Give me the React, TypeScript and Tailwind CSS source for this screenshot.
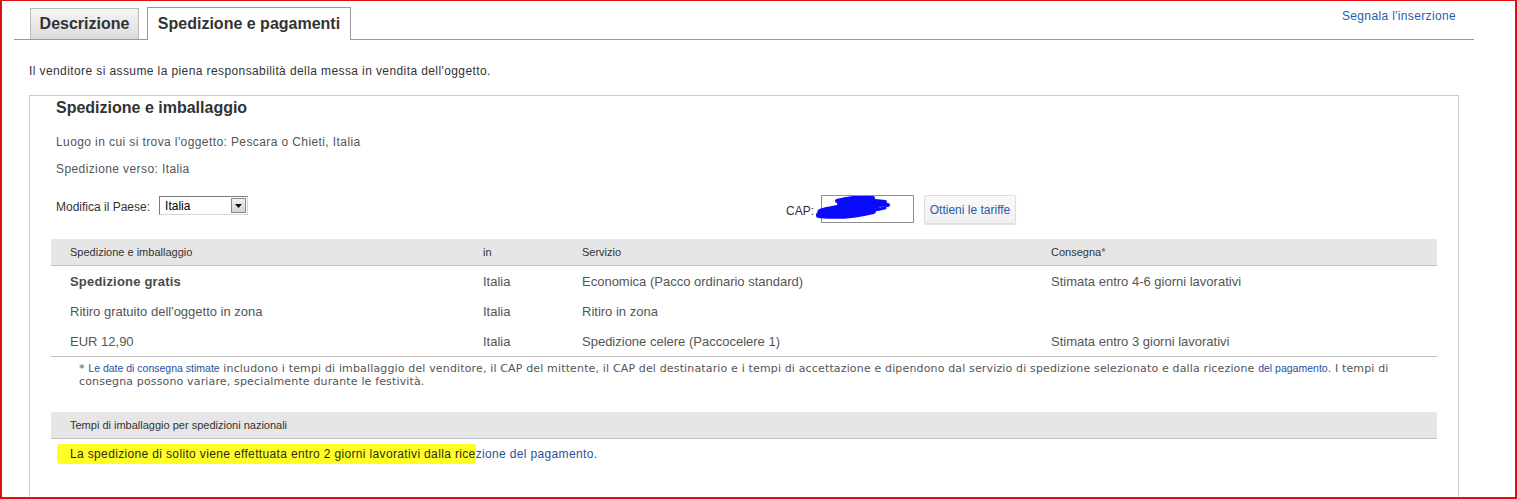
import React from "react";

const sans = "font-['Liberation_Sans',Arial,sans-serif]";

function Select() {
  return (
    <div className="relative flex h-[19px] w-[89px] items-center border border-t-[#7b7b7b] border-l-[#7b7b7b] border-r-[#d6d6d6] border-b-[#d6d6d6] bg-white">
      <span className="pl-[5px] text-[12px] leading-[14px] text-black">Italia</span>
      <div className="absolute right-[1px] top-[1px] flex h-[15px] w-[15px] items-center justify-center border border-[#8a8a8a] bg-gradient-to-b from-[#f2f2f2] to-[#d4d4d4]">
        <svg width="7" height="4" viewBox="0 0 7 4">
          <path d="M0 0 H7 L3.5 4 Z" fill="#111" />
        </svg>
      </div>
    </div>
  );
}

export default function App() {
  return (
    <div
      className={`${sans} relative h-[499px] w-[1517px] overflow-hidden border-t border-l-2 border-r-2 border-b-2 border-[#e01010] bg-white text-[#333]`}
    >
      {/* Tabs */}
      <div className="ml-[12px] flex h-[39px] w-[1460px] items-end border-b border-[#999] pl-[16px]">
        <div className="flex h-[31px] w-[109px] items-center justify-center border border-b-0 border-[#b9b9b9] bg-gradient-to-b from-[#f5f5f5] to-[#dcdcdc] text-[16px] font-bold leading-[18px] text-[#333]">
          Descrizione
        </div>
        <div className="-mb-px ml-[8px] flex h-[33px] w-[204px] items-center justify-center border border-b-0 border-[#999] bg-white pb-[1px] text-[16px] font-bold leading-[18px] text-[#333]">
          Spedizione e pagamenti
        </div>
        <a className="mt-[8px] mr-[18px] ml-auto self-start text-[12px] leading-[14px] tracking-[0.35px] text-[#2b5aa8]">
          Segnala l'inserzione
        </a>
      </div>

      <p className="mt-[24px] ml-[27px] text-[12px] leading-[14px] tracking-[0.4px] text-[#333]">
        Il venditore si assume la piena responsabilità della messa in vendita dell'oggetto.
      </p>

      {/* Box */}
      <div className="mt-[17px] ml-[27px] h-[420px] w-[1430px] border border-[#cccccc] pt-[3px]">
        <h2 className="pl-[26px] text-[16px] font-bold leading-[18px] text-[#333]">Spedizione e imballaggio</h2>
        <p className="mt-[18px] pl-[26px] text-[12px] leading-[14px] tracking-[0.4px] text-[#555]">
          Luogo in cui si trova l'oggetto: Pescara o Chieti, Italia
        </p>
        <p className="mt-[13px] pl-[26px] text-[12px] leading-[14px] tracking-[0.4px] text-[#555]">
          Spedizione verso: Italia
        </p>

        <div className="mt-[19px] flex h-[29px] pl-[26px]">
          <div className="flex w-[730px] items-end self-start pt-[1px]">
            <span className="mb-[1px] text-[12px] leading-[14px] text-[#333]">Modifica il Paese:</span>
            <div className="ml-[9px]">
              <Select />
            </div>
          </div>
          <div className="flex items-start">
            <span className="mt-[9px] text-[12px] leading-[14px] text-[#333]">CAP:</span>
            <div className="relative ml-[7px] h-[28px] w-[93px] border border-[#8f8f8f] bg-white">
              <svg
                className="absolute left-[-7px] top-[0px]"
                width="80"
                height="24"
                viewBox="0 0 80 24"
              >
                <g fill="none" stroke="#0a0aff" strokeLinecap="round" strokeLinejoin="round">
                  <path d="M6 16 C 20 12, 40 10, 62 9" strokeWidth="7" />
                  <path d="M4 19 C 22 21, 42 19, 58 15" strokeWidth="6" />
                  <path d="M22 5 C 32 2, 46 1, 58 2" strokeWidth="4" />
                  <path d="M24 8 C 36 5, 54 4, 70 6" strokeWidth="4" />
                  <path d="M40 12 C 52 10, 62 8, 73 9" strokeWidth="4" />
                  <path d="M48 15 C 58 15, 64 13, 70 12" strokeWidth="3" />
                  <path d="M12 14 C 24 17, 40 16, 54 13" strokeWidth="5" />
                </g>
              </svg>
            </div>
            <button className="ml-[10px] flex h-[29px] w-[92px] items-center justify-center rounded-[2px] border border-[#dedede] bg-gradient-to-b from-[#fafafa] to-[#f0f0f0] text-[12px] leading-[14px] text-[#2b5aa8] shadow-[0_1px_1px_rgba(0,0,0,0.12)]">
              Ottieni le tariffe
            </button>
          </div>
        </div>

        {/* Table */}
        <div className="mt-[15px] ml-[21px] w-[1386px]">
          <div className="grid h-[27px] grid-cols-[413px_99px_469px_1fr] items-center border-b border-[#c2c2c2] bg-[#e6e6e6] text-[11px] leading-[13px] text-[#333]">
            <div className="pl-[19px]">Spedizione e imballaggio</div>
            <div className="pl-[19px]">in</div>
            <div className="pl-[19px]">Servizio</div>
            <div className="pl-[19px]">
              Consegna<span className="text-[#2b5aa8]">*</span>
            </div>
          </div>
          <div className="border-b border-[#c2c2c2] text-[13px] leading-[15px] text-[#555]">
            <div className="grid h-[30px] grid-cols-[413px_99px_469px_1fr] items-center">
              <div className="pl-[19px] font-bold tracking-[0.2px] text-[#4a4a4a]">Spedizione gratis</div>
              <div className="pl-[19px]">Italia</div>
              <div className="pl-[19px]">Economica (Pacco ordinario standard)</div>
              <div className="pl-[19px]">Stimata entro 4-6 giorni lavorativi</div>
            </div>
            <div className="grid h-[30px] grid-cols-[413px_99px_469px_1fr] items-center">
              <div className="pl-[19px]">Ritiro gratuito dell'oggetto in zona</div>
              <div className="pl-[19px]">Italia</div>
              <div className="pl-[19px]">Ritiro in zona</div>
              <div className="pl-[19px]"></div>
            </div>
            <div className="grid h-[30px] grid-cols-[413px_99px_469px_1fr] items-center">
              <div className="pl-[19px]">EUR 12,90</div>
              <div className="pl-[19px]">Italia</div>
              <div className="pl-[19px]">Spedizione celere (Paccocelere 1)</div>
              <div className="pl-[19px]">Stimata entro 3 giorni lavorativi</div>
            </div>
          </div>

          <p className="pt-[5px] pl-[28px] font-['DejaVu_Sans',Verdana,sans-serif] text-[11px] leading-[13px] tracking-[0.15px] text-[#555]">
            *{" "}
            <a className={`${sans} text-[10.5px] tracking-normal text-[#1f4fa0]`}>Le date di consegna stimate</a>{" "}
            includono i tempi di imballaggio del venditore, il CAP del mittente, il CAP del destinatario e i tempi di
            accettazione e dipendono dal servizio di spedizione selezionato e dalla ricezione{" "}
            <a className={`${sans} text-[10.5px] tracking-normal text-[#1f4fa0]`}>del pagamento</a>. I tempi di
            <br />
            consegna possono variare, specialmente durante le festività.
          </p>

          <div className="mt-[24px] flex h-[27px] items-center border-b border-[#c2c2c2] bg-[#e6e6e6] pl-[19px] text-[11px] leading-[13px] text-[#333]">
            Tempi di imballaggio per spedizioni nazionali
          </div>

          <p className="mt-[8px] pl-[19px] text-[12px] leading-[14px] tracking-[0.35px] text-[#2b4f96]">
            <span className="-ml-[13px] rounded-[3px] bg-[#ffff26] py-[3px] pl-[13px] text-[#2d2d10]">
              La spedizione di solito viene effettuata entro 2 giorni lavorativi dalla rice
            </span>
            zione del pagamento.
          </p>
        </div>
      </div>
    </div>
  );
}
